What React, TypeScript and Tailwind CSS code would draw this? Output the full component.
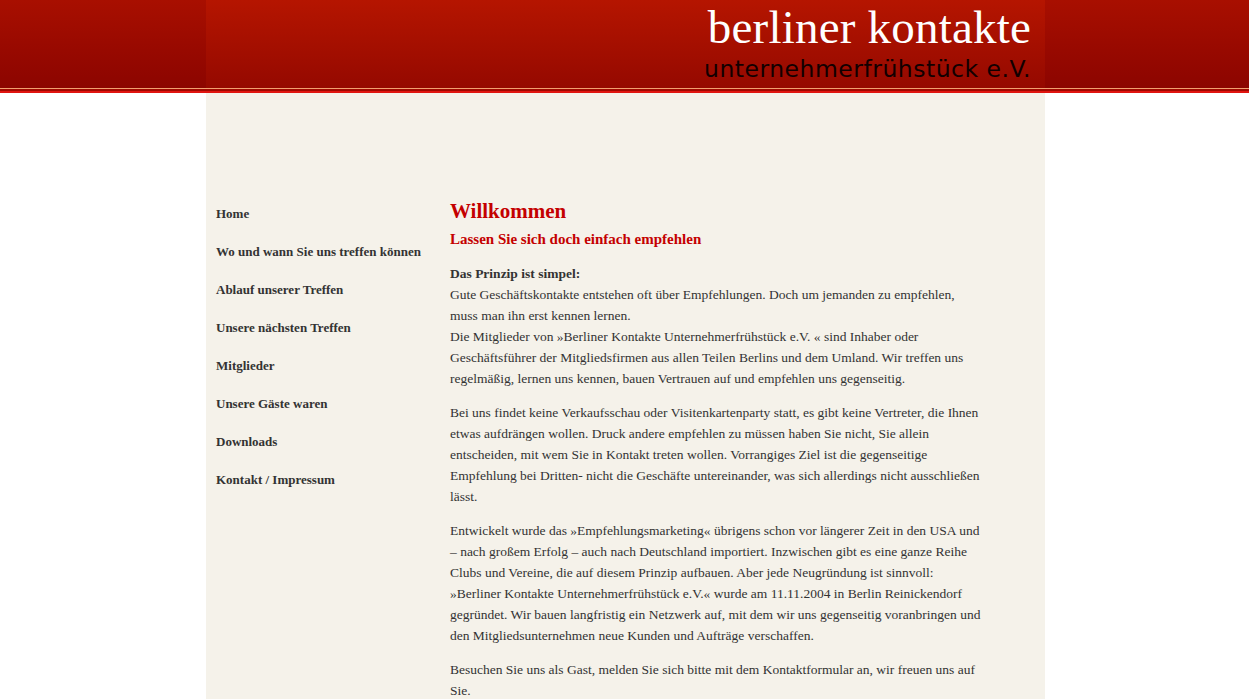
import React from 'react';

const navItems = [
  'Home',
  'Wo und wann Sie uns treffen können',
  'Ablauf unserer Treffen',
  'Unsere nächsten Treffen',
  'Mitglieder',
  'Unsere Gäste waren',
  'Downloads',
  'Kontakt / Impressum',
];

const serif = { fontFamily: '"Liberation Serif", "Times New Roman", serif' };

const App: React.FC = () => {
  return (
    <div className="min-h-screen bg-white pl-[2px]" style={serif}>
      {/* header */}
      <header className="-ml-[2px] bg-gradient-to-b from-[#a80f00] to-[#8c0500] pl-[2px]">
        <div className="mx-auto w-[839px] h-[88px] bg-gradient-to-b from-[#b51500] to-[#950900] flex flex-col items-end pr-[14px]">
          <div className="text-[47px] leading-none text-white mt-[4px] tracking-[0.2px]" style={serif}>
            berliner kontakte
          </div>
          <div
            className="text-[23.5px] leading-none text-[#120000] mt-[7px] tracking-[0.5px]"
            style={{ fontFamily: '"DejaVu Sans", Verdana, sans-serif' }}
          >
            unternehmerfrühstück e.V.
          </div>
        </div>
      </header>
      <div className="-ml-[2px] h-px bg-[#f0a070]" />
      <div className="-ml-[2px] h-[2px] bg-[#a00800]" />
      <div className="-ml-[2px] h-[2px] bg-[#e01510]" />

      {/* body */}
      <div className="mx-auto w-[839px] min-h-[606px] bg-[#f5f2ea] flex pt-[105px]">
        <nav className="w-[244px] pl-[10px] pt-[6px] flex flex-col gap-[18px]">
          {navItems.map((item) => (
            <a key={item} href="#" className="text-[13px] leading-[20px] font-bold text-[#333]">
              {item}
            </a>
          ))}
        </nav>

        <main className="w-[560px] text-[13.5px] leading-[21px] text-[#333]">
          <h1 className="text-[21px] leading-[26px] font-bold text-[#c40000]">Willkommen</h1>
          <h2 className="mt-[5px] text-[15px] leading-[20px] font-bold text-[#c40000]">
            Lassen Sie sich doch einfach empfehlen
          </h2>
          <p className="mt-[14px]">
            <strong>Das Prinzip ist simpel:</strong>
            <br />
            Gute Geschäftskontakte entstehen oft über Empfehlungen. Doch um jemanden zu empfehlen,
            <br />
            muss man ihn erst kennen lernen.
            <br />
            Die Mitglieder von »Berliner Kontakte Unternehmerfrühstück e.V. « sind Inhaber oder
            <br />
            Geschäftsführer der Mitgliedsfirmen aus allen Teilen Berlins und dem Umland. Wir treffen uns
            <br />
            regelmäßig, lernen uns kennen, bauen Vertrauen auf und empfehlen uns gegenseitig.
          </p>
          <p className="mt-[13px]">
            Bei uns findet keine Verkaufsschau oder Visitenkartenparty statt, es gibt keine Vertreter, die Ihnen
            <br />
            etwas aufdrängen wollen. Druck andere empfehlen zu müssen haben Sie nicht, Sie allein
            <br />
            entscheiden, mit wem Sie in Kontakt treten wollen. Vorrangiges Ziel ist die gegenseitige
            <br />
            Empfehlung bei Dritten- nicht die Geschäfte untereinander, was sich allerdings nicht ausschließen
            <br />
            lässt.
          </p>
          <p className="mt-[13px]">
            Entwickelt wurde das »Empfehlungsmarketing« übrigens schon vor längerer Zeit in den USA und
            <br />
            – nach großem Erfolg – auch nach Deutschland importiert. Inzwischen gibt es eine ganze Reihe
            <br />
            Clubs und Vereine, die auf diesem Prinzip aufbauen. Aber jede Neugründung ist sinnvoll:
            <br />
            »Berliner Kontakte Unternehmerfrühstück e.V.« wurde am 11.11.2004 in Berlin Reinickendorf
            <br />
            gegründet. Wir bauen langfristig ein Netzwerk auf, mit dem wir uns gegenseitig voranbringen und
            <br />
            den Mitgliedsunternehmen neue Kunden und Aufträge verschaffen.
          </p>
          <p className="mt-[13px]">
            Besuchen Sie uns als Gast, melden Sie sich bitte mit dem Kontaktformular an, wir freuen uns auf
            <br />
            Sie.
          </p>
        </main>
      </div>
    </div>
  );
};

export default App;
